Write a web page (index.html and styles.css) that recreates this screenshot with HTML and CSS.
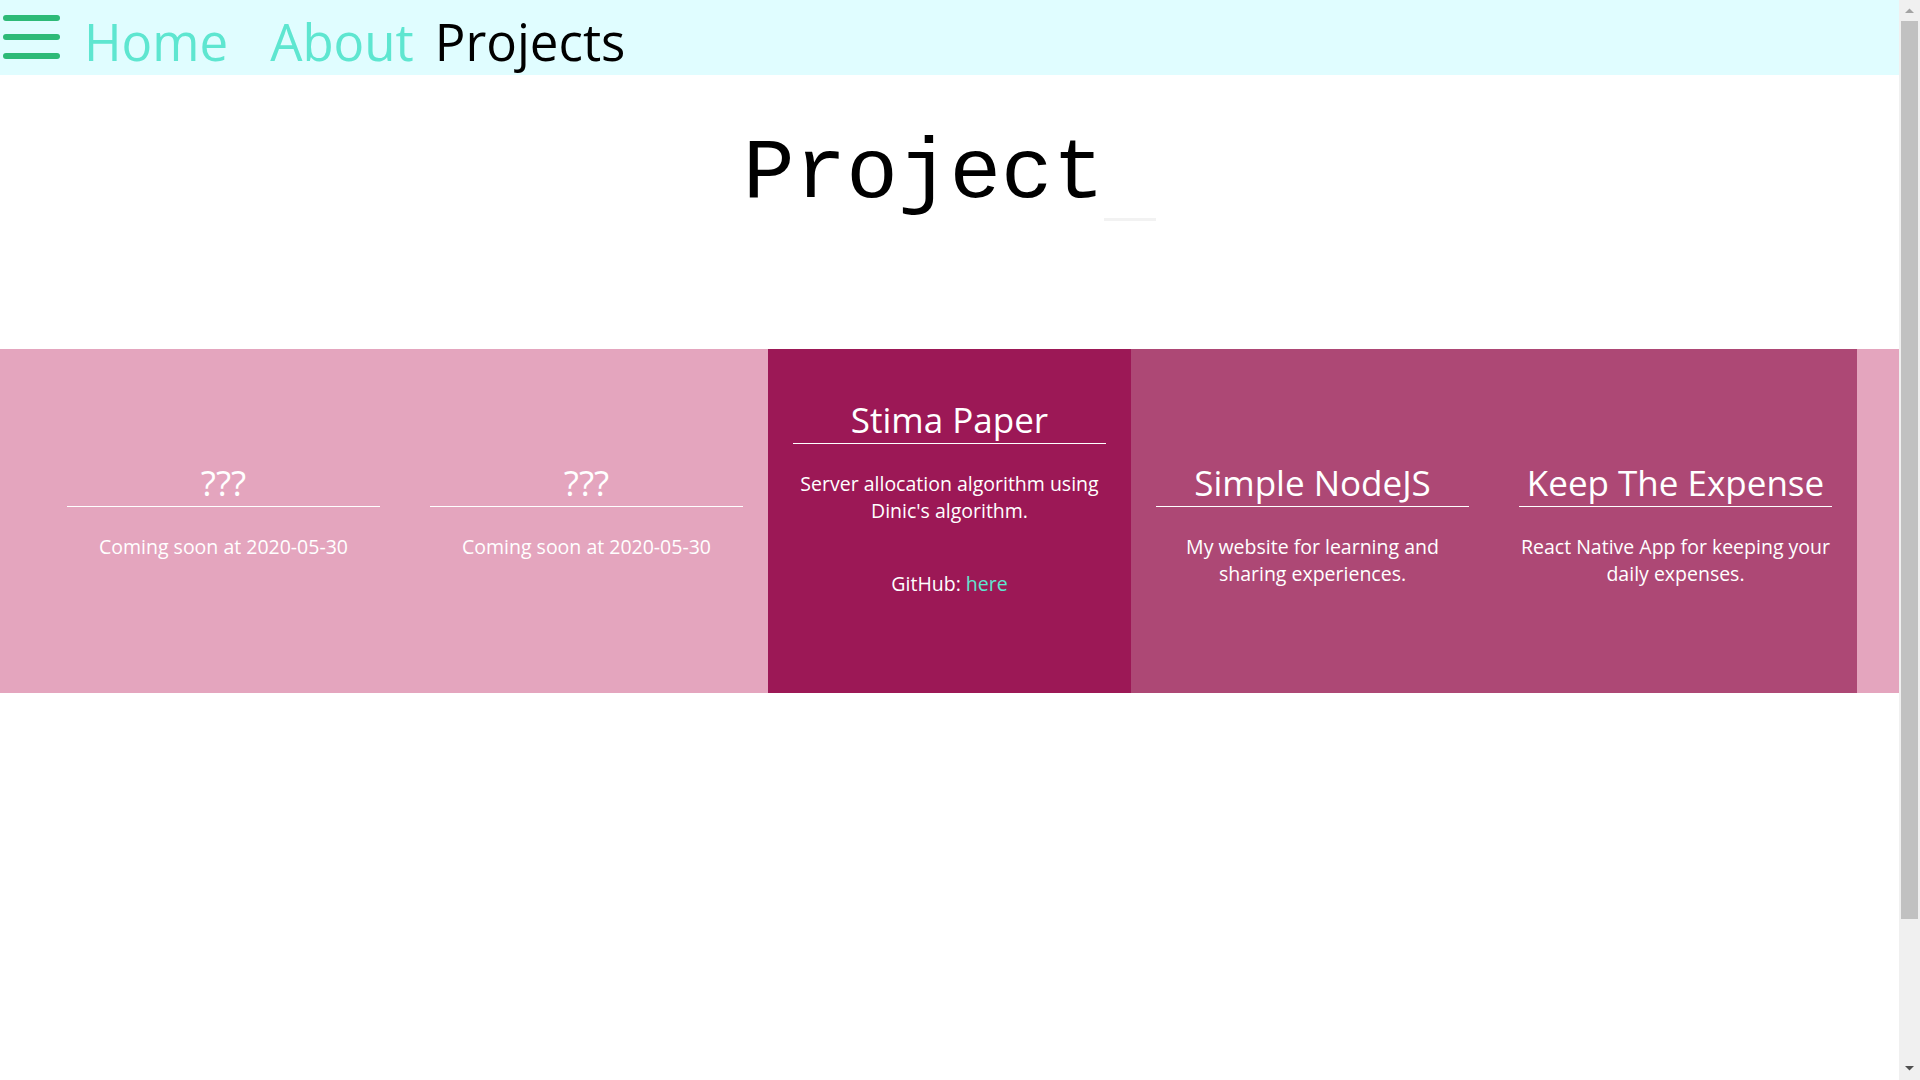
FILE: index.html
```html
<!DOCTYPE html>
<html lang="en">
<head>
<meta charset="utf-8">
<title>Projects</title>
<link rel="stylesheet" href="styles.css">
</head>
<body>
<header class="navbar">
  <button class="menu-btn" aria-label="Menu">
    <svg class="menu-icon" width="64" height="75" viewBox="0 0 64 75">
      <line x1="6" y1="18" x2="57" y2="18"/>
      <line x1="6" y1="37" x2="57" y2="37"/>
      <line x1="6" y1="56" x2="57" y2="56"/>
    </svg>
  </button>
  <nav class="nav-links">
    <a class="nav-link nav-home" href="#">Home</a>
    <a class="nav-link nav-about" href="#">About</a>
    <a class="nav-link nav-current" href="#">Projects</a>
  </nav>
</header>
<main class="page">
  <h1 class="page-title">Project<span class="cursor"></span></h1>
  <section class="projects">
    <div class="project-track">
      <article class="card">
        <h2 class="card-title">???</h2>
        <p class="card-desc">Coming soon at 2020-05-30</p>
      </article>
      <article class="card">
        <h2 class="card-title">???</h2>
        <p class="card-desc">Coming soon at 2020-05-30</p>
      </article>
      <article class="card card-featured">
        <h2 class="card-title">Stima Paper</h2>
        <p class="card-desc">Server allocation algorithm using Dinic's algorithm.</p>
        <p class="card-desc card-link">GitHub: <a href="#">here</a></p>
      </article>
      <article class="card card-done">
        <h2 class="card-title">Simple NodeJS</h2>
        <p class="card-desc">My website for learning and sharing experiences.</p>
      </article>
      <article class="card card-done">
        <h2 class="card-title">Keep The Expense</h2>
        <p class="card-desc">React Native App for keeping your daily expenses.</p>
      </article>
    </div>
  </section>
</main>
<div class="scrollbar" aria-hidden="true">
  <div class="sb-button">
    <svg width="21" height="21" viewBox="0 0 21 21"><polygon class="sb-arrow-off" points="6,13 10.5,8.5 15,13"/></svg>
  </div>
  <div class="sb-track">
    <div class="sb-thumb"></div>
  </div>
  <div class="sb-button">
    <svg width="21" height="21" viewBox="0 0 21 21"><polygon class="sb-arrow-on" points="6,7 15,7 10.5,11.5"/></svg>
  </div>
</div>
</body>
</html>
```

FILE: styles.css
```css
html {
  overflow-x: hidden;
}

body {
  margin: 0 21px 0 0;
  font-family: "Open Sans", "Noto Sans", sans-serif;
  color: #000;
  background: #fff;
}

/* window scrollbar (drawn over the right edge) */
.scrollbar {
  position: fixed;
  top: 0;
  right: 0;
  width: 21px;
  height: 100vh;
  display: flex;
  flex-direction: column;
  background: #f0f0f0;
}

.sb-button {
  flex: none;
  height: 21px;
}

.sb-button svg {
  display: block;
}

.sb-arrow-off {
  fill: #a3a3a3;
}

.sb-arrow-on {
  fill: #505050;
}

.sb-track {
  flex: 1;
}

.sb-thumb {
  height: 898px;
  margin: 0 2px;
  background: #c1c1c1;
}

/* navigation */
.navbar {
  display: flex;
  align-items: center;
  height: 75px;
  background: #e0fdff;
}

.menu-btn {
  display: block;
  padding: 0;
  margin: 0;
  border: 0;
  background: none;
  height: 75px;
  cursor: pointer;
}

.menu-icon {
  display: block;
}

.menu-icon line {
  stroke: #2dba77;
  stroke-width: 6;
  stroke-linecap: round;
}

.nav-links {
  display: flex;
  align-items: center;
}

.nav-link {
  font-size: 51px;
  line-height: normal;
  padding-top: 7px;
  text-decoration: none;
  color: #5ee6d0;
}

.nav-home {
  margin-left: 20px;
}

.nav-about {
  margin-left: 42px;
}

.nav-current {
  margin-left: 21px;
  color: #000;
}

/* page */
.page {
  padding-bottom: 555px;
}

.page-title {
  margin: 50px 0 126px;
  height: 98px;
  font-family: "Liberation Mono", "Courier New", monospace;
  font-size: 86px;
  font-weight: 400;
  line-height: 98px;
  text-align: center;
}

.cursor {
  display: inline-block;
  width: 1ch;
  height: 0;
  border-bottom: 3px solid #f2f2f2;
  margin-bottom: -24px;
}

.projects {
  height: 344px;
  background: #e4a5be;
}

.project-track {
  display: flex;
  justify-content: center;
  height: 100%;
}

.card {
  flex: none;
  width: 363px;
  box-sizing: border-box;
  padding: 110px 25px 0;
  color: #fff;
  text-align: center;
}

.card-featured {
  background: #9c1856;
  padding-top: 47px;
}

.card-done {
  background: #ad4875;
}

.card-title {
  margin: 0;
  font-size: 35px;
  font-weight: 400;
  line-height: normal;
  border-bottom: 1px solid #fff;
}

.card-desc {
  margin: 26px 0 0;
  font-size: 19.5px;
  line-height: 27px;
}

.card-link {
  margin-top: 46px;
}

.card-link a {
  color: #5ee6d0;
  text-decoration: none;
}
```
